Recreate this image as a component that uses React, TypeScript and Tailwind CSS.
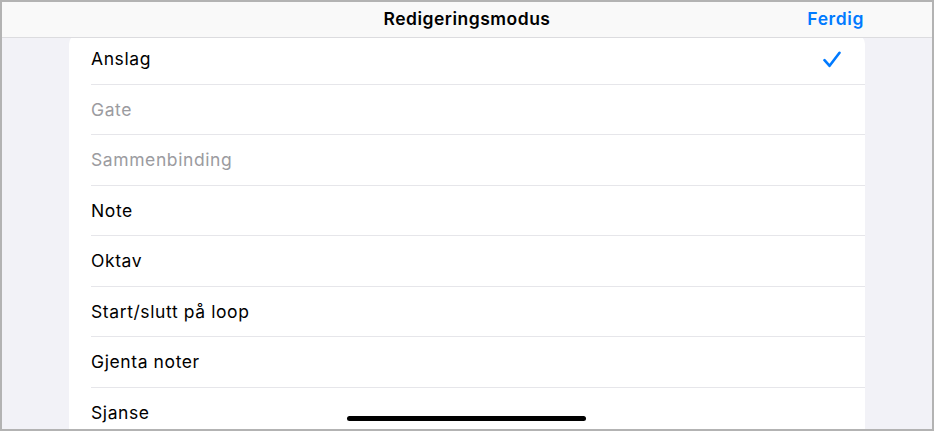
const rows = [
  { label: "Anslag", checked: true },
  { label: "Gate", disabled: true },
  { label: "Sammenbinding", disabled: true },
  { label: "Note" },
  { label: "Oktav" },
  { label: "Start/slutt på loop" },
  { label: "Gjenta noter" },
  { label: "Sjanse" },
];

function Check() {
  return (
    <svg width="18" height="17" viewBox="0 0 18 17" fill="none">
      <path d="M1.5 9.2 L6.6 14.8 L16.5 1.8" stroke="#007aff" strokeWidth="2.6" strokeLinecap="round" strokeLinejoin="round" />
    </svg>
  );
}

export default function App() {
  return (
    <div
      className="relative w-[934px] h-[431px] overflow-hidden border-2 border-[#b3b3b3] bg-[#f2f2f7] text-black"
      style={{ fontFamily: "Inter, 'Noto Sans', sans-serif" }}
    >
      <div className="relative z-10 h-[36px] flex items-center justify-center bg-[#f9f9f9] border-b border-[#dcdcdf]">
        <div className="text-[17.5px] font-semibold tracking-[0.5px]">Redigeringsmodus</div>
        <div className="absolute right-[68px] top-0 h-full flex items-center text-[17.5px] font-semibold tracking-[0.6px] text-[#007aff]">
          Ferdig
        </div>
      </div>

      <div className="mx-[67px] -mt-[4px] bg-white rounded-t-[10px]">
        {rows.map((r, i) => (
          <div key={r.label} className="pl-[22px]">
            <div
              className={`h-[50.5px] pt-[1px] flex items-center justify-between pr-[24px] ${
                i < rows.length - 1 ? "border-b border-[#e6e6ea]" : ""
              }`}
            >
              <span className={`text-[17.5px] tracking-[0.6px] ${r.disabled ? "text-[#9b9ba0]" : "text-black"}`}>
                {r.label}
              </span>
              {r.checked && <Check />}
            </div>
          </div>
        ))}
      </div>

      <div className="absolute left-[345px] top-[414px] w-[239px] h-[5px] rounded-full bg-black z-20" />
    </div>
  );
}
